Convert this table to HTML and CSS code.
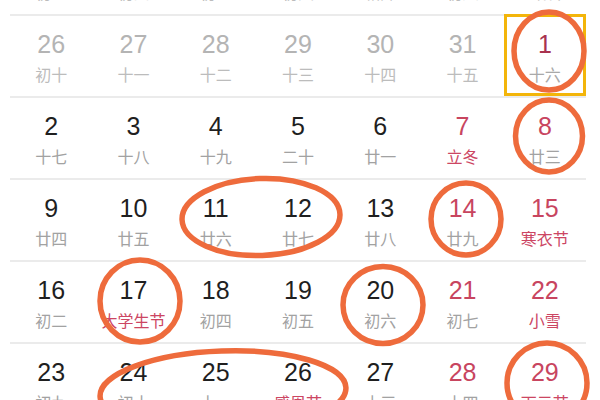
FILE: index.html
```html
<!DOCTYPE html>
<html lang="zh">
<head>
<meta charset="utf-8">
<link rel="stylesheet" href="styles.css">
</head>
<body>
<div class="page">
  <div class="calendar">
    <div class="week">
      <div class="day other"><span class="num">19</span><span class="lunar">初三</span></div>
      <div class="day other"><span class="num">20</span><span class="lunar">初四</span></div>
      <div class="day other"><span class="num">21</span><span class="lunar">初五</span></div>
      <div class="day other"><span class="num">22</span><span class="lunar">初六</span></div>
      <div class="day other"><span class="num">23</span><span class="lunar">霜降</span></div>
      <div class="day other"><span class="num">24</span><span class="lunar">初八</span></div>
      <div class="day other"><span class="num">25</span><span class="lunar">重阳节</span></div>
    </div>
    <div class="week">
      <div class="day other"><span class="num">26</span><span class="lunar">初十</span></div>
      <div class="day other"><span class="num">27</span><span class="lunar">十一</span></div>
      <div class="day other"><span class="num">28</span><span class="lunar">十二</span></div>
      <div class="day other"><span class="num">29</span><span class="lunar">十三</span></div>
      <div class="day other"><span class="num">30</span><span class="lunar">十四</span></div>
      <div class="day other"><span class="num">31</span><span class="lunar">十五</span></div>
      <div class="day today"><span class="num">1</span><span class="lunar">十六</span></div>
    </div>
    <div class="week">
      <div class="day"><span class="num">2</span><span class="lunar">十七</span></div>
      <div class="day"><span class="num">3</span><span class="lunar">十八</span></div>
      <div class="day"><span class="num">4</span><span class="lunar">十九</span></div>
      <div class="day"><span class="num">5</span><span class="lunar">二十</span></div>
      <div class="day"><span class="num">6</span><span class="lunar">廿一</span></div>
      <div class="day weekend"><span class="num">7</span><span class="lunar fest">立冬</span></div>
      <div class="day weekend"><span class="num">8</span><span class="lunar">廿三</span></div>
    </div>
    <div class="week">
      <div class="day"><span class="num">9</span><span class="lunar">廿四</span></div>
      <div class="day"><span class="num">10</span><span class="lunar">廿五</span></div>
      <div class="day"><span class="num">11</span><span class="lunar">廿六</span></div>
      <div class="day"><span class="num">12</span><span class="lunar">廿七</span></div>
      <div class="day"><span class="num">13</span><span class="lunar">廿八</span></div>
      <div class="day weekend"><span class="num">14</span><span class="lunar">廿九</span></div>
      <div class="day weekend"><span class="num">15</span><span class="lunar fest">寒衣节</span></div>
    </div>
    <div class="week">
      <div class="day"><span class="num">16</span><span class="lunar">初二</span></div>
      <div class="day"><span class="num">17</span><span class="lunar fest">大学生节</span></div>
      <div class="day"><span class="num">18</span><span class="lunar">初四</span></div>
      <div class="day"><span class="num">19</span><span class="lunar">初五</span></div>
      <div class="day"><span class="num">20</span><span class="lunar">初六</span></div>
      <div class="day weekend"><span class="num">21</span><span class="lunar">初七</span></div>
      <div class="day weekend"><span class="num">22</span><span class="lunar fest">小雪</span></div>
    </div>
    <div class="week">
      <div class="day"><span class="num">23</span><span class="lunar">初九</span></div>
      <div class="day"><span class="num">24</span><span class="lunar">初十</span></div>
      <div class="day"><span class="num">25</span><span class="lunar">十一</span></div>
      <div class="day"><span class="num">26</span><span class="lunar fest">感恩节</span></div>
      <div class="day"><span class="num">27</span><span class="lunar">十三</span></div>
      <div class="day weekend"><span class="num">28</span><span class="lunar">十四</span></div>
      <div class="day weekend"><span class="num">29</span><span class="lunar fest">下元节</span></div>
    </div>
  </div>
  <svg class="marks" width="600" height="400" viewBox="0 0 600 400" aria-hidden="true">
    <g fill="none" stroke="#ee6b3c" stroke-width="5.5">
      <ellipse cx="549" cy="51" rx="35" ry="39"/>
      <ellipse cx="549" cy="136" rx="33.5" ry="36"/>
      <ellipse cx="261" cy="217" rx="79" ry="38.5" transform="rotate(-2 261 217)"/>
      <ellipse cx="466" cy="219" rx="35" ry="36"/>
      <ellipse cx="140" cy="301" rx="40" ry="41"/>
      <ellipse cx="383" cy="305" rx="40" ry="38.5"/>
      <ellipse cx="223" cy="392" rx="123" ry="41" transform="rotate(-2 223 392)"/>
      <ellipse cx="547" cy="383" rx="40" ry="40"/>
    </g>
  </svg>
</div>
</body>
</html>
```

FILE: styles.css
```css
html, body {
  margin: 0;
  padding: 0;
  background: #ffffff;
}

.page {
  position: relative;
  width: 600px;
  height: 400px;
  overflow: hidden;
}

.calendar {
  margin-top: -68px;
  padding-left: 10px;
  width: 576px;
  display: flex;
  flex-direction: column;
}

.week {
  display: grid;
  grid-template-columns: repeat(7, 1fr);
  height: 82px;
  border-top: 2px solid #ebebeb;
  box-sizing: border-box;
}

.day {
  display: flex;
  flex-direction: column;
  align-items: center;
  padding-top: 13px;
  gap: 5px;
}

.num {
  font-family: "Liberation Sans", Arial, sans-serif;
  font-size: 25px;
  line-height: 30px;
  color: #1f1f1f;
}

.lunar {
  font-family: "Noto Sans CJK SC", sans-serif;
  font-size: 16px;
  line-height: 20px;
  color: #a2a2a2;
  white-space: nowrap;
}

.other .num {
  color: #b4b4b4;
}

.other .lunar {
  color: #bcbcbc;
}

.weekend .num {
  color: #c8455f;
}

.lunar.fest {
  color: #cc4663;
}

.today {
  box-shadow: inset 0 0 0 3px #f3b50a;
  margin-top: -2px;
  padding-top: 15px;
}

.today .num {
  color: #a8324f;
}

.today .lunar {
  color: #a9a9a9;
}

.marks {
  position: absolute;
  left: 0;
  top: 0;
}
```
